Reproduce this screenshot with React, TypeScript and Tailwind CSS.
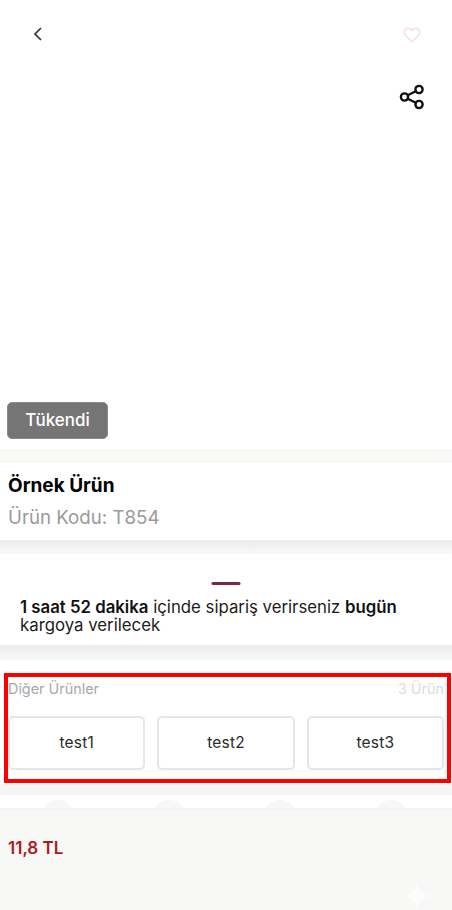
import React from 'react';

const FONT = "font-['Inter','Liberation_Sans',sans-serif]";

const VARIANTS = ['test1', 'test2', 'test3'];

const App: React.FC = () => (
  <div className={`relative flex h-[910px] w-[452px] flex-col overflow-hidden bg-white ${FONT}`}>
    {/* Hero */}
    <div className="flex h-[449px] flex-col px-2">
      <div className="flex h-[68px] items-start justify-between pt-[27px] pl-[25px] pr-[23px]">
        <svg width="10" height="14" viewBox="0 0 10 14" fill="none" stroke="#333" strokeWidth="1.7">
          <path d="M8 1 L2 7 L8 13" />
        </svg>
        <svg width="18" height="16" viewBox="0 0 24 22" fill="none" stroke="#f9d5e3" strokeWidth="1.8">
          <path d="M12 20.5 L3 11.5 C0.5 9 0.8 5 3.2 3 C5.8 1 9.6 1.4 12 4.6 C14.4 1.4 18.2 1 20.8 3 C23.2 5 23.5 9 21 11.5 Z" />
        </svg>
      </div>
      <div className="flex justify-end pr-[19px] pt-[16px]">
        <svg width="26" height="26" viewBox="0 0 26 26" fill="none" stroke="#111" strokeWidth="2.4">
          <circle cx="20" cy="5.5" r="3.6" />
          <circle cx="20" cy="20.5" r="3.6" />
          <circle cx="5.5" cy="13" r="3.6" />
          <path d="M8.7 11.3 L16.8 7.2 M8.7 14.7 L16.8 18.8" />
        </svg>
      </div>
      <div className="mt-auto mb-[10px] -ml-px flex h-[37px] w-[101px] items-center justify-center rounded-[5px] border border-[#8a8a8a] bg-[#757575] text-[17px] font-medium text-white">
        Tükendi
      </div>
    </div>

    <div className="h-[14px] bg-[#f8f8f7]" />

    {/* Product */}
    <div className="flex h-[77px] flex-col bg-white pl-2 pt-[9px]">
      <div className="text-[19px] leading-[27px] font-bold text-black">Örnek Ürün</div>
      <div className="mt-[7px] text-[18.7px] leading-[24px] text-[#9a9a9a]">Ürün Kodu: T854</div>
    </div>

    <div className="h-[14px] bg-gradient-to-b from-[#ececec] to-[#f8f8f8]" />

    {/* Delivery */}
    <div className="flex h-[91px] flex-col bg-white px-5 pt-[28px]">
      <div className="mx-auto h-[3px] w-[29px] -translate-x-[0.5px] rounded-full bg-[#7f2645]" />
      <p className="mt-[13px] text-[16.8px] leading-[18px] text-[#1c1c1c]">
        <b className="font-semibold text-[#111]">1 saat 52 dakika</b> içinde sipariş verirseniz{' '}
        <b className="font-semibold text-[#111]">bugün</b>
        <br />
        kargoya verilecek
      </p>
    </div>

    <div className="h-[15px] bg-gradient-to-b from-[#ececec] to-[#f8f8f8]" />

    {/* Other products */}
    <div className="flex h-[124px] flex-col bg-white px-2 pt-[20px]">
      <div className="flex items-center justify-between text-[14.4px] leading-[17px]">
        <span className="text-[#a8a8a8]">Diğer Ürünler</span>
        <span className="text-[#dcdcdc]">3 Ürün</span>
      </div>
      <div className="mt-[19px] grid grid-cols-3 gap-3">
        {VARIANTS.map((name) => (
          <div
            key={name}
            className="flex h-[54px] items-center justify-center rounded-[5px] border-2 border-[#e6e6e6] bg-white text-[15.5px] tracking-[0.2px] text-[#2a2a2a]"
          >
            {name}
          </div>
        ))}
      </div>
    </div>

    <div className="h-[11px] bg-[#f5f5f5]" />

    {/* Recommendations peeking under the bar */}
    <div className="flex h-[13px] items-start gap-[77px] overflow-hidden bg-white pt-[5px] pl-[41px]">
      {[0, 1, 2, 3].map((i) => (
        <div key={i} className="h-[34px] w-[34px] shrink-0 rounded-full bg-[#f7f7f7]" />
      ))}
    </div>

    {/* Bottom bar */}
    <div className="relative flex-1 border-t-2 border-[#f4f4f4] bg-[#f8f8f7] pl-2 pt-[26px]">
      <div className="text-[17px] leading-[24px] font-semibold text-[#ad1a1e]">11,8 TL</div>
      <svg className="absolute right-[19px] bottom-[-1px]" width="32" height="30" viewBox="0 0 32 32" fill="#fdfdfd">
        <path d="M16 1 C17 10 22 15 31 16 C22 17 17 22 16 31 C15 22 10 17 1 16 C10 15 15 10 16 1 Z" />
      </svg>
    </div>

    {/* Highlight */}
    <div className="absolute top-[673px] left-[4px] h-[110px] w-[447px] border-4 border-[#ff0000]" />
  </div>
);

export default App;
